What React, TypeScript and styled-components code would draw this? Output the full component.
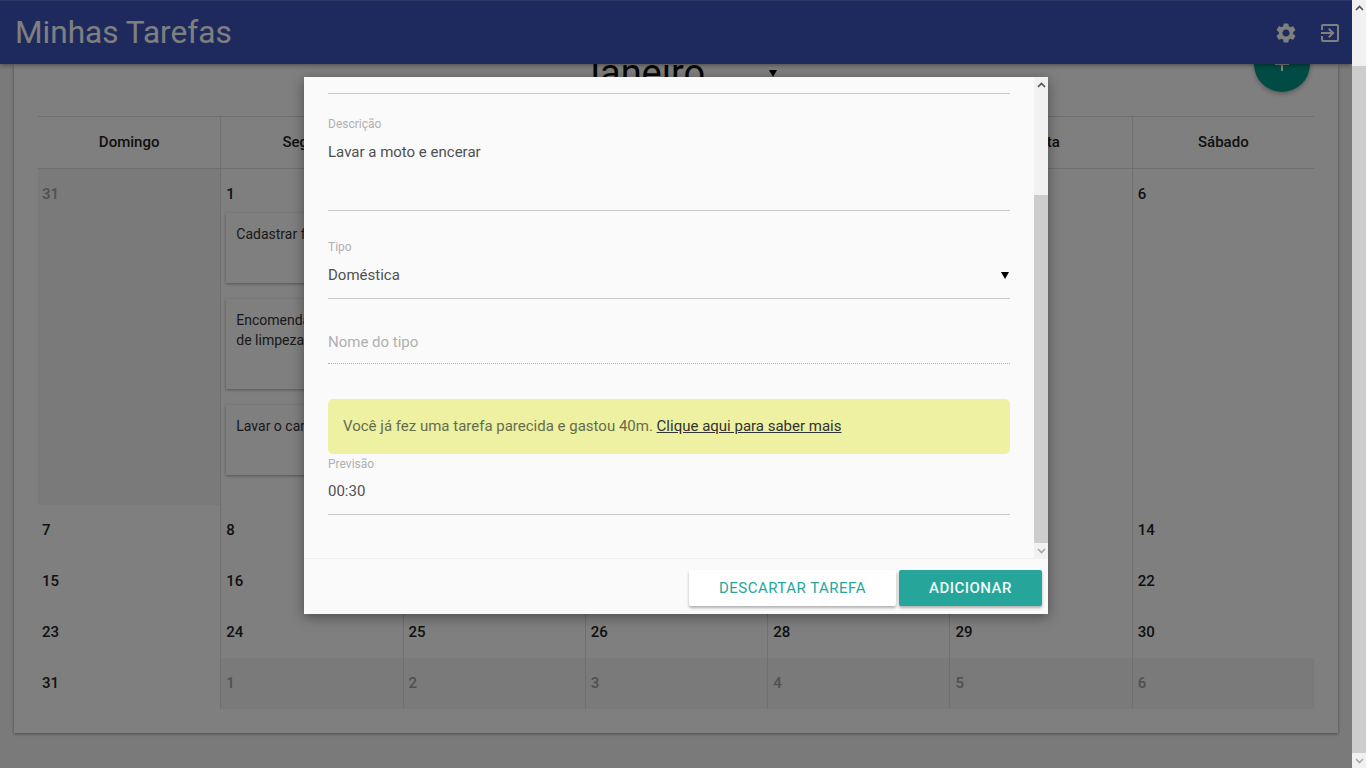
import React from "react";
import styled, { createGlobalStyle } from "styled-components";
import { MdAdd, MdExitToApp, MdSettings } from "react-icons/md";

const GlobalStyle = createGlobalStyle`
  html, body {
    margin: 0;
    padding: 0;
    overflow: hidden;
    font-family: Roboto, "Liberation Sans", sans-serif;
    background-color: #f5f5f5;
  }
  * {
    box-sizing: border-box;
  }
`;

const Screen = styled.div`
  width: 1366px;
  height: 768px;
  display: flex;
  overflow: hidden;
`;

const Page = styled.div`
  position: relative;
  width: 1352px;
  height: 768px;
  overflow: hidden;
  background-color: #f5f5f5;
`;

const Header = styled.header`
  position: relative;
  z-index: 2;
  height: 64px;
  padding: 0 10px 0 15px;
  display: flex;
  align-items: center;
  justify-content: space-between;
  border-top: 1px solid #5e74d0;
  background-color: #3c54bc;
  color: #ffffff;
  box-shadow: 0 1px 5px rgba(0, 0, 0, 0.45);
`;

const AppTitle = styled.h1`
  margin: 0;
  font-size: 31.6px;
  font-weight: 400;
`;

const HeaderActions = styled.div`
  display: flex;
  gap: 20px;
  font-size: 24px;
`;

const HeaderIcon = styled.span`
  width: 24px;
  height: 24px;
  display: block;
`;

const Main = styled.main`
  padding: 0 14px;
`;

const Card = styled.section`
  position: relative;
  padding: 0 24px 24px;
  background-color: #ffffff;
  box-shadow: 0 1px 3px rgba(0, 0, 0, 0.4);
`;

const Fab = styled.div`
  position: absolute;
  top: -28px;
  right: 28px;
  width: 56px;
  height: 56px;
  display: flex;
  align-items: center;
  justify-content: center;
  border-radius: 50%;
  background-color: #009688;
  color: #ffffff;
  font-size: 24px;
  box-shadow: 0 2px 5px rgba(0, 0, 0, 0.3);
`;

const MonthRow = styled.div`
  height: 52px;
  padding-left: 541px;
  display: flex;
  align-items: flex-start;
`;

const MonthSelect = styled.div`
  width: 202px;
  height: 44px;
  margin-top: -13px;
  padding-right: 4px;
  display: flex;
  align-items: flex-start;
  justify-content: space-between;
  font-size: 38px;
  line-height: 44px;
  color: #111111;
`;

const Caret = styled.i<{ $top: number; $right?: number }>`
  flex: none;
  width: 0;
  height: 0;
  margin-top: ${(props) => props.$top}px;
  margin-right: ${(props) => props.$right ?? 0}px;
  border-left: 4px solid transparent;
  border-right: 4px solid transparent;
  border-top: 7px solid #000000;
`;

const Table = styled.div`
  display: grid;
  grid-template-columns: repeat(7, 1fr);
`;

const WeekDay = styled.div<{ $first: boolean }>`
  height: 53px;
  padding-bottom: 2px;
  display: flex;
  align-items: center;
  justify-content: center;
  border-top: 1px solid #dedede;
  border-bottom: 1px solid #dedede;
  border-left: ${(props) => (props.$first ? "none" : "1px solid #dedede")};
  font-size: 15px;
  font-weight: 500;
  color: #222222;
`;

const Day = styled.div<{ $first: boolean; $off: boolean }>`
  min-height: 51px;
  padding: 15px 5px 16px ${(props) => (props.$first ? 4 : 5)}px;
  border-left: ${(props) => (props.$first ? "none" : "1px solid #dedede")};
  background-color: ${(props) => (props.$off ? "#f5f5f5" : "transparent")};
`;

const DayNumber = styled.div<{ $off: boolean }>`
  font-size: 15px;
  font-weight: 500;
  line-height: 20px;
  color: ${(props) => (props.$off ? "#a0a0a0" : "#222222")};
`;

const TaskList = styled.div`
  margin: 9px 0 14px;
  display: flex;
  flex-direction: column;
  gap: 16px;
`;

const Task = styled.div`
  padding: 11px 10px 39px;
  background-color: #ffffff;
  font-size: 14px;
  line-height: 20px;
  color: #333333;
  box-shadow: 0 1px 3px rgba(0, 0, 0, 0.35);
`;

const Overlay = styled.div`
  position: absolute;
  inset: 0;
  z-index: 3;
  padding-top: 77px;
  display: flex;
  justify-content: center;
  align-items: flex-start;
  background-color: rgba(0, 0, 0, 0.5);
`;

const Dialog = styled.div`
  width: 744px;
  height: 537px;
  display: flex;
  flex-direction: column;
  background-color: #fafafa;
  box-shadow: 0 3px 12px rgba(0, 0, 0, 0.4);
`;

const DialogBody = styled.div`
  flex: 1;
  min-height: 0;
  display: flex;
`;

const Form = styled.div`
  flex: 1;
  padding: 16px 24px 0;
`;

const Field = styled.div<{ $top: number }>`
  margin-top: ${(props) => props.$top}px;
`;

const Label = styled.div<{ $gap?: number }>`
  margin-bottom: ${(props) => props.$gap ?? 10}px;
  font-size: 12px;
  line-height: 16px;
  color: #b0b0b0;
`;

const Value = styled.div<{ $rows: number }>`
  min-height: ${(props) => props.$rows}px;
  display: flex;
  justify-content: space-between;
  font-size: 15px;
  line-height: 20px;
  color: #505050;
`;

const Placeholder = styled.div`
  height: 31px;
  font-size: 15px;
  line-height: 20px;
  color: #b0b0b0;
`;

const Rule = styled.div`
  height: 1px;
  background-color: #c8c8c8;
`;

const DottedRule = styled.div`
  height: 1px;
  border-top: 1px dotted #b0b0b0;
`;

const Hint = styled.div`
  height: 55px;
  margin-top: 35px;
  padding: 0 15px 2px;
  display: flex;
  align-items: center;
  border-radius: 5px;
  background-color: #edf1a1;
  font-size: 15px;
  color: #656d4e;
`;

const HintLink = styled.a`
  color: #333333;
  text-decoration: underline;
`;

const DialogFooter = styled.div`
  height: 56px;
  padding: 11px 6px 0 0;
  display: flex;
  justify-content: flex-end;
  gap: 3px;
  border-top: 1px solid #f1f1f1;
`;

const Button = styled.button<{ $primary?: boolean }>`
  height: 36px;
  padding: 0 30px;
  border: none;
  border-radius: 2px;
  background-color: ${(props) => (props.$primary ? "#26a69a" : "#ffffff")};
  color: ${(props) => (props.$primary ? "#f0f8f7" : "#26a69a")};
  font-family: inherit;
  font-size: 15px;
  font-weight: ${(props) => (props.$primary ? 500 : 400)};
  letter-spacing: 0.5px;
  box-shadow: 0 2px 3px rgba(0, 0, 0, 0.3);
`;

const ScrollBar = styled.div`
  flex: none;
  width: 14px;
  display: flex;
  flex-direction: column;
  background-color: #f1f1f1;
`;

const ScrollArrow = styled.div<{ $muted?: boolean }>`
  flex: none;
  height: 15px;
  display: flex;
  align-items: center;
  justify-content: center;
  color: ${(props) => (props.$muted ? "#a8a8a8" : "#505050")};
`;

const ScrollSpace = styled.div<{ $height: number }>`
  flex: none;
  height: ${(props) => props.$height}px;
`;

const ScrollThumb = styled.div`
  flex: 1;
  background-color: #cdcdcd;
`;

type ScrollProps = { before: number };

function Scroller({ before }: ScrollProps) {
  return (
    <ScrollBar>
      <ScrollArrow>
        <svg width="9" height="6" viewBox="0 0 9 6">
          <path d="M1 5l3.5-3.5L8 5" fill="none" stroke="currentColor" strokeWidth="1.6" />
        </svg>
      </ScrollArrow>
      <ScrollSpace $height={before} />
      <ScrollThumb />
      <ScrollArrow $muted>
        <svg width="9" height="6" viewBox="0 0 9 6">
          <path d="M1 1l3.5 3.5L8 1" fill="none" stroke="currentColor" strokeWidth="1.6" />
        </svg>
      </ScrollArrow>
    </ScrollBar>
  );
}

const weekDays = ["Domingo", "Segunda", "Terça", "Quarta", "Quinta", "Sexta", "Sábado"];

const weeks: { n: number; off?: boolean }[][] = [
  [{ n: 31, off: true }, { n: 1 }, { n: 2 }, { n: 3 }, { n: 4 }, { n: 5 }, { n: 6 }],
  [{ n: 7 }, { n: 8 }, { n: 9 }, { n: 10 }, { n: 11 }, { n: 12 }, { n: 14 }],
  [{ n: 15 }, { n: 16 }, { n: 17 }, { n: 18 }, { n: 19 }, { n: 20 }, { n: 22 }],
  [{ n: 23 }, { n: 24 }, { n: 25 }, { n: 26 }, { n: 28 }, { n: 29 }, { n: 30 }],
  [
    { n: 31 },
    { n: 1, off: true },
    { n: 2, off: true },
    { n: 3, off: true },
    { n: 4, off: true },
    { n: 5, off: true },
    { n: 6, off: true },
  ],
];

const tasks = ["Cadastrar fornecedores", "Encomendar produtos de limpeza", "Lavar o carro"];

function App() {
  return (
    <Screen>
      <GlobalStyle />
      <Page>
        <Header>
          <AppTitle>Minhas Tarefas</AppTitle>
          <HeaderActions>
            <HeaderIcon as={MdSettings} />
            <HeaderIcon as={MdExitToApp} />
          </HeaderActions>
        </Header>
        <Main>
          <Card>
            <Fab>
              <MdAdd />
            </Fab>
            <MonthRow>
              <MonthSelect>
                Janeiro
                <Caret $top={19} />
              </MonthSelect>
            </MonthRow>
            <Table>
              {weekDays.map((name, i) => (
                <WeekDay key={name} $first={i === 0}>
                  {name}
                </WeekDay>
              ))}
              {weeks.map((week, w) =>
                week.map((day, i) => (
                  <Day key={`${w}-${i}`} $first={i === 0} $off={!!day.off}>
                    <DayNumber $off={!!day.off}>{day.n}</DayNumber>
                    {w === 0 && day.n === 1 && (
                      <TaskList>
                        {tasks.map((task) => (
                          <Task key={task}>{task}</Task>
                        ))}
                      </TaskList>
                    )}
                  </Day>
                ))
              )}
            </Table>
          </Card>
        </Main>
        <Overlay>
          <Dialog>
            <DialogBody>
              <Form>
                <Rule />
                <Field $top={22}>
                  <Label>Descrição</Label>
                  <Value $rows={68}>Lavar a moto e encerar</Value>
                  <Rule />
                </Field>
                <Field $top={28}>
                  <Label>Tipo</Label>
                  <Value $rows={33}>
                    Doméstica
                    <Caret $top={7} $right={1} />
                  </Value>
                  <Rule />
                </Field>
                <Field $top={33}>
                  <Placeholder>Nome do tipo</Placeholder>
                  <DottedRule />
                </Field>
                <Hint>
                  <span>
                    Você já fez uma tarefa parecida e gastou 40m.{" "}
                    <HintLink>Clique aqui para saber mais</HintLink>
                  </span>
                </Hint>
                <Field $top={2}>
                  <Label $gap={9}>Previsão</Label>
                  <Value $rows={33}>00:30</Value>
                  <Rule />
                </Field>
              </Form>
              <Scroller before={103} />
            </DialogBody>
            <DialogFooter>
              <Button>DESCARTAR TAREFA</Button>
              <Button $primary>ADICIONAR</Button>
            </DialogFooter>
          </Dialog>
        </Overlay>
      </Page>
      <Scroller before={51} />
    </Screen>
  );
}

export default App;
